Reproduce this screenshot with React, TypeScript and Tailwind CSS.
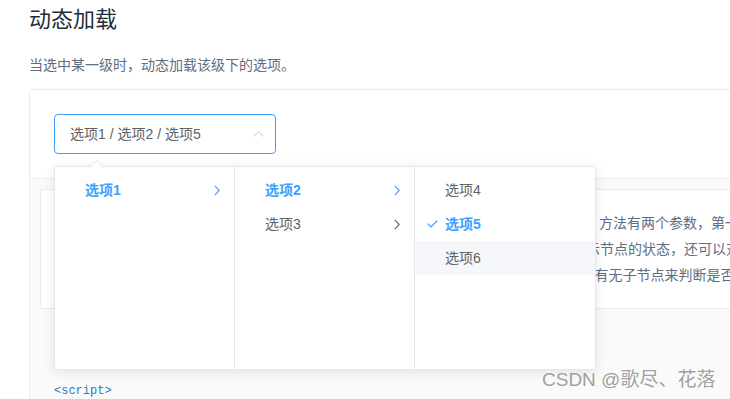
import React from 'react';

const FONT = '"Liberation Sans", "Noto Sans CJK SC", sans-serif';

const ArrowRight = ({ className = '' }: { className?: string }) => (
  <svg width="6" height="11" viewBox="0 0 6 11" fill="none" className={className}>
    <path d="M0.8 0.8 L5.2 5.5 L0.8 10.2" stroke="currentColor" strokeWidth="1.1" />
  </svg>
);

const CheckIcon = () => (
  <svg width="11" height="8" viewBox="0 0 11 8" fill="none">
    <path d="M0.7 3.6 L4 6.9 L10.3 0.7" stroke="#409eff" strokeWidth="1.2" />
  </svg>
);

type Node = { label: string; active?: boolean; hasChild?: boolean; checked?: boolean; hover?: boolean };

const menus: Node[][] = [
  [{ label: '选项1', active: true, hasChild: true }],
  [
    { label: '选项2', active: true, hasChild: true },
    { label: '选项3', hasChild: true },
  ],
  [
    { label: '选项4' },
    { label: '选项5', active: true, checked: true },
    { label: '选项6', hover: true },
  ],
];

const Code = ({ children }: { children: React.ReactNode }) => (
  <code className="mx-1 px-1 inline-block h-[18px] leading-[18px] text-[12px] text-[#5e6d82] bg-[#f9fafc] border border-[#eaeefb] rounded align-middle font-['Liberation_Mono',monospace]">
    {children}
  </code>
);

export default function App() {
  return (
    <div className="w-[730px] h-[399px] overflow-hidden bg-white relative" style={{ fontFamily: FONT }}>
      <div className="pl-[29px]">
        <h3 className="pt-[5px] text-[22px] leading-[30px] font-normal text-[#1f2f3d]">动态加载</h3>
        <p className="mt-[19px] text-[14px] leading-[22px] text-[#5e6d82]">当选中某一级时，动态加载该级下的选项。</p>

        <div className="mt-[13px] w-[760px] border border-[#ebebeb] rounded">
          {/* source */}
          <div className="p-6">
            <div className="relative w-[222px]">
              <div className="h-10 flex items-center justify-between border border-[#409eff] rounded pl-[15px] pr-[11px] text-[14px] text-[#606266]">
                <span>选项1 / 选项2 / 选项5</span>
                <svg width="11" height="6" viewBox="0 0 11 6" fill="none">
                  <path d="M0.5 5.5 L5.5 0.7 L10.5 5.5" stroke="#c0c4cc" strokeWidth="1" />
                </svg>
              </div>

              {/* dropdown */}
              <div className="absolute left-0 top-[52px] z-10 flex bg-white border border-[#e4e7ed] rounded shadow-[0_2px_12px_0_rgba(0,0,0,0.1)]">
                <svg width="14" height="8" viewBox="0 0 14 8" className="absolute left-[35px] -top-[7px]">
                  <path d="M0 7.5 L7 0.8 L14 7.5" fill="white" stroke="#e4e7ed" strokeWidth="1" />
                </svg>
                {menus.map((menu, i) => (
                  <div
                    key={i}
                    className={`w-[180px] h-[202px] py-1.5 ${i < menus.length - 1 ? 'border-r border-[#e4e7ed]' : ''}`}
                  >
                    {menu.map((n) => (
                      <div
                        key={n.label}
                        className={`relative h-[34px] flex items-center pl-5 pr-[30px] text-[14px] ${
                          n.hover ? 'bg-[#f5f7fa]' : ''
                        } ${n.active ? 'text-[#409eff] font-bold' : 'text-[#606266]'}`}
                      >
                        {n.checked && (
                          <span className="absolute left-[12px] top-[13px] flex">
                            <CheckIcon />
                          </span>
                        )}
                        <span className="px-2.5">{n.label}</span>
                        {n.hasChild && (
                          <ArrowRight
                            className={`absolute right-[14px] top-[12px] ${n.active ? 'text-[#409eff]' : 'text-[#606266]'}`}
                          />
                        )}
                      </div>
                    ))}
                  </div>
                ))}
              </div>
            </div>
          </div>

          {/* meta */}
          <div className="bg-[#fafafa] border-t border-[#eaeefb]">
            <div className="m-2.5 p-5 bg-white border border-[#ebebeb] rounded-[3px] text-[14px] leading-[26px] text-[#5e6d82] overflow-hidden">
              <div className="whitespace-nowrap h-[26px]">
                通过<Code>lazy</Code>开启动态加载，并通过<Code>lazyload</Code>来设置加载数据源的方法。<Code>lazyload</Code> 方法有两个参数，第一个参数为当前点击的节点
              </div>
              <div className="whitespace-nowrap h-[26px]">
                为当前点击的节点，第二个参数为数据加载完成的回调（必须调用）。为了更准确的显示节点的状态，还可以对节点数据添加是否为叶子节点的标志位
              </div>
              <div className="whitespace-nowrap h-[26px]">
                节点的标志位（默认字段为leaf，可通过属性修改字段的名称来设置），否则会简单的以有无子节点来判断是否为叶子节点。
              </div>
            </div>
            <pre className="px-6 pt-[19px] pb-4 text-[12px] leading-[1.8] text-[#2f7bbf] font-['Liberation_Mono',monospace]">
              {'<el-cascader :props="props"></el-cascader>\n\n<script>\n'}
            </pre>
          </div>
        </div>
      </div>

      <div className="absolute left-[542px] top-[367px] z-20 text-[19px] leading-[26px] text-[#a0a0a0] [text-shadow:0_0_2px_#ffffff]">
        CSDN @歌尽、花落
      </div>
    </div>
  );
}
